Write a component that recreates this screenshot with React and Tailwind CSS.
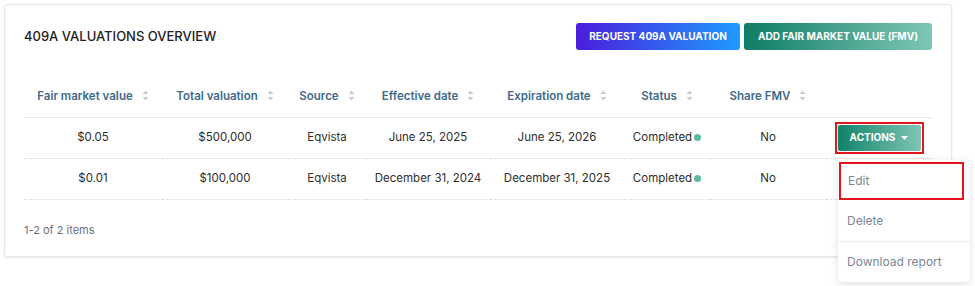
import React from 'react';

const COLUMNS = [
  { label: 'Fair market value', w: 'w-[138px]' },
  { label: 'Total valuation', w: 'w-[126px]' },
  { label: 'Source', w: 'w-[78px]' },
  { label: 'Effective date', w: 'w-[124px]' },
  { label: 'Expiration date', w: 'w-[134px]' },
  { label: 'Status', w: 'w-[86px]' },
  { label: 'Share FMV', w: 'w-[116px]' },
];

const ROWS = [
  { fmv: '$0.05', total: '$500,000', source: 'Eqvista', eff: 'June 25, 2025', exp: 'June 25, 2026', status: 'Completed', share: 'No' },
  { fmv: '$0.01', total: '$100,000', source: 'Eqvista', eff: 'December 31, 2024', exp: 'December 31, 2025', status: 'Completed', share: 'No' },
];

function SortIcon() {
  return (
    <svg width="7" height="11" viewBox="0 0 7 11" className="inline-block ml-[9px] align-[-1px]">
      <path d="M3.5 0.5 L6.5 4 H0.5 Z" fill="#c7ccd3" />
      <path d="M3.5 10.5 L6.5 7 H0.5 Z" fill="#c7ccd3" />
    </svg>
  );
}

export default function App() {
  return (
    <div className="w-[975px] h-[286px] bg-white relative font-['Inter','Open_Sans',sans-serif] pt-[4px] pl-[4px]">
      <div className="w-[948px] h-[253px] bg-white border border-[#e4e6ea] rounded-[3px] shadow-[0_1px_3px_rgba(0,0,0,0.08)] px-[19px] pt-[18px]">
        <div className="flex items-start justify-between">
          <h2 className="text-[13px] font-medium text-[#222] mt-[4px]">409A VALUATIONS OVERVIEW</h2>
          <div className="flex gap-[4px]">
            <button className="h-[27px] w-[164px] rounded-[3px] text-white text-[10px] font-bold bg-[linear-gradient(90deg,#4a1ddc,#1f9bff)]">
              REQUEST 409A VALUATION
            </button>
            <button className="h-[27px] w-[188px] rounded-[3px] text-white text-[10px] font-bold bg-[linear-gradient(90deg,#0f7d66,#7fc6b6)]">
              ADD FAIR MARKET VALUE (FMV)
            </button>
          </div>
        </div>

        <table className="mt-[34px] w-[908px] table-fixed border-collapse text-[11.5px]">
          <thead>
            <tr className="border-b border-[#e3e6ec] h-[33px]">
              {COLUMNS.map(c => (
                <th key={c.label} className={`${c.w} font-semibold text-[#3e6a8c] text-center pb-[7px]`}>
                  {c.label}<SortIcon />
                </th>
              ))}
              <th className="w-[106px]"></th>
            </tr>
          </thead>
          <tbody className="text-[#2e2e2e]">
            {ROWS.map((r, i) => (
              <tr key={i} className="border-b border-dotted border-[#d4d8de] h-[41px]">
                <td className="text-center">{r.fmv}</td>
                <td className="text-center">{r.total}</td>
                <td className="text-center">{r.source}</td>
                <td className="text-center">{r.eff}</td>
                <td className="text-center">{r.exp}</td>
                <td className="text-center">
                  {r.status}<span className="inline-block w-[7px] h-[7px] rounded-full bg-[#5bb9a3] ml-[2px] align-[0px]"></span>
                </td>
                <td className="text-center">{r.share}</td>
                <td className="text-center">
                  {i === 0 && (
                    <div className="inline-block border-2 border-[#e2141c] p-[1px] align-middle">
                      <button className="h-[26px] w-[83px] rounded-[2px] text-white text-[10px] font-bold flex items-center justify-center gap-[6px] bg-[linear-gradient(90deg,#10826a,#7fc6b6)]">
                        ACTIONS
                        <svg width="7" height="4" viewBox="0 0 7 4"><path d="M0 0 H7 L3.5 4 Z" fill="white" /></svg>
                      </button>
                    </div>
                  )}
                </td>
              </tr>
            ))}
          </tbody>
        </table>

        <p className="mt-[22px] text-[11px] text-[#6b7078]">1-2 of 2 items</p>
      </div>

      <div className="absolute left-[838px] top-[160px] w-[132px] bg-white rounded-[4px] shadow-[0_2px_8px_rgba(0,0,0,0.12)] text-[12px] text-[#7a8597]">
        <div className="h-[38px] flex items-center px-[7px] border-2 border-[#e2141c] ml-[1px] mr-[6px] mt-[2px]">Edit</div>
        <div className="h-[42px] flex items-center px-[9px] border-b border-[#eceef1]">Delete</div>
        <div className="h-[40px] flex items-center px-[9px]">Download report</div>
      </div>
    </div>
  );
}
